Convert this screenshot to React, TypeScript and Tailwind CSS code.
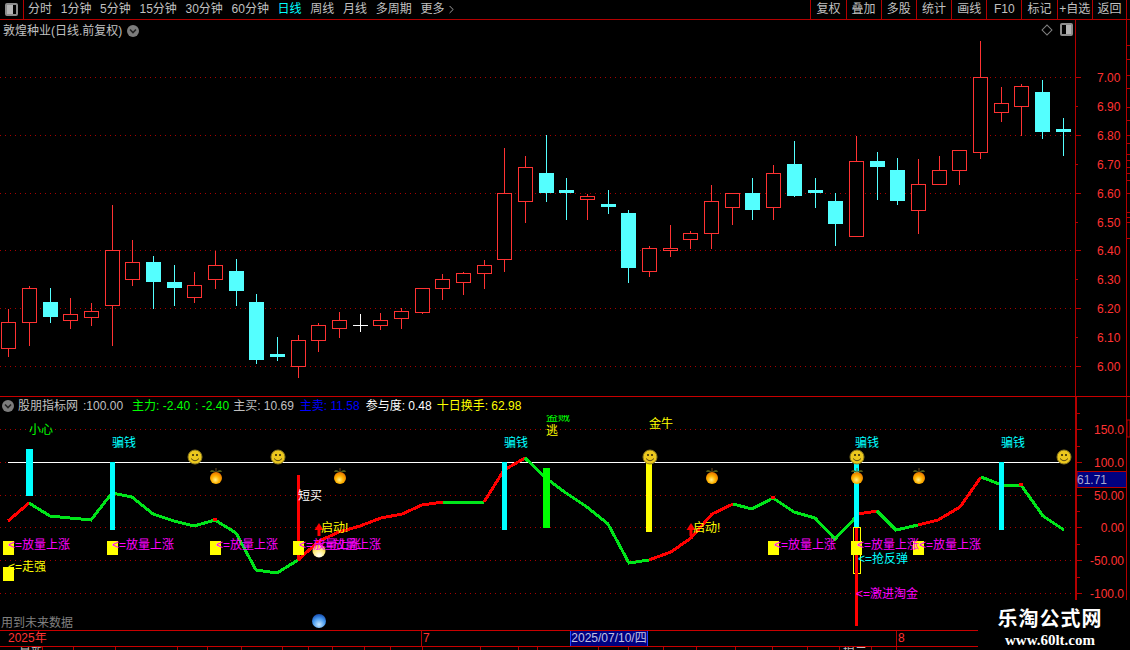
import { ChevronRight } from "lucide-react";

type Candle = [number, number, number, number, number, "r" | "c" | "w"];

// x, wick top, wick bottom, body top, body bottom, kind
const candles: Candle[] = [
  [8, 309, 356, 322, 348, "r"], [29, 286, 345, 288, 322, "r"], [50, 288, 322, 302, 317, "c"],
  [70, 298, 328, 314, 320, "r"], [91, 303, 325, 311, 317, "r"], [112, 205, 345, 250, 305, "r"],
  [132, 240, 285, 262, 279, "r"], [153, 256, 308, 262, 282, "c"], [174, 265, 305, 282, 288, "c"],
  [194, 272, 302, 285, 297, "r"], [215, 251, 288, 265, 279, "r"], [236, 259, 305, 271, 291, "c"],
  [256, 294, 363, 302, 360, "c"], [277, 337, 360, 354, 357, "c"], [298, 335, 377, 340, 366, "r"],
  [318, 323, 351, 325, 340, "r"], [339, 312, 337, 320, 328, "r"], [360, 314, 331, 325, 325, "w"],
  [380, 313, 329, 320, 325, "r"], [401, 308, 328, 311, 318, "r"], [422, 288, 313, 288, 312, "r"],
  [442, 274, 299, 279, 288, "r"], [463, 272, 294, 273, 282, "r"], [484, 260, 288, 265, 273, "r"],
  [504, 148, 271, 193, 259, "r"], [525, 156, 222, 167, 201, "r"], [546, 135, 201, 173, 193, "c"],
  [566, 178, 219, 190, 193, "c"], [587, 194, 219, 196, 199, "r"], [608, 190, 213, 204, 207, "c"],
  [628, 210, 282, 213, 268, "c"], [649, 246, 276, 248, 271, "r"], [670, 225, 256, 248, 250, "r"],
  [690, 231, 248, 233, 239, "r"], [711, 185, 248, 201, 233, "r"], [732, 193, 224, 193, 207, "r"],
  [752, 178, 219, 193, 210, "c"], [773, 165, 219, 173, 207, "r"], [794, 141, 196, 164, 196, "c"],
  [815, 178, 207, 190, 193, "c"], [835, 193, 245, 201, 224, "c"], [856, 136, 236, 161, 236, "r"],
  [877, 152, 199, 161, 167, "c"], [897, 158, 204, 170, 201, "c"], [918, 159, 233, 184, 210, "r"],
  [939, 156, 184, 170, 184, "r"], [959, 150, 184, 150, 170, "r"], [980, 41, 158, 77, 152, "r"],
  [1001, 87, 121, 103, 112, "r"], [1021, 84, 135, 86, 106, "r"], [1042, 80, 138, 92, 132, "c"],
  [1063, 118, 155, 129, 132, "c"],
];

const RED = "#ff3232";
const CYAN = "#54ffff";
const LINE_RED = "#ff0000";
const LINE_GREEN = "#00e61a";

const priceTicks = [
  { y: 77, label: "7.00", major: true }, { y: 106, label: "6.90", major: false },
  { y: 135, label: "6.80", major: true }, { y: 164, label: "6.70", major: false },
  { y: 193, label: "6.60", major: true }, { y: 222, label: "6.50", major: false },
  { y: 250, label: "6.40", major: true }, { y: 279, label: "6.30", major: false },
  { y: 308, label: "6.20", major: true }, { y: 337, label: "6.10", major: false },
  { y: 366, label: "6.00", major: true },
];

const rightTicks = [45, 59, 75, 88, 107, 120, 135, 143, 154, 160, 167, 173, 180, 193, 212, 217, 222, 238];

const indicatorTicks = [
  { y: 429, label: "150.0" }, { y: 462, label: "100.0" }, { y: 495, label: "50.00" },
  { y: 527, label: "0.00" }, { y: 560, label: "-50.00" }, { y: 593, label: "-100.0" },
];

const segments: { color: string; pts: string }[] = [
  { color: LINE_RED, pts: "8,521 29,503" },
  { color: LINE_GREEN, pts: "29,503 50,516 70,518 91,520 112,493 132,497 153,514 174,521 194,526 215,520 236,533 256,570 277,573 298,560" },
  { color: LINE_RED, pts: "298,560 319,541 339,532 360,526 381,518 402,514 422,505 443,502" },
  { color: LINE_GREEN, pts: "443,502 484,502" },
  { color: LINE_RED, pts: "484,502 504,470 525,458" },
  { color: LINE_GREEN, pts: "525,458 546,478 566,493 587,507 608,524 629,563 649,560" },
  { color: LINE_RED, pts: "649,560 671,552 691,538 712,514 733,504" },
  { color: LINE_GREEN, pts: "733,504 752,509 773,498 794,512 815,518 835,539 856,517" },
  { color: LINE_RED, pts: "858,514 877,511" },
  { color: LINE_GREEN, pts: "877,511 896,530 918,525" },
  { color: LINE_RED, pts: "918,525 938,520 960,507 981,477" },
  { color: LINE_GREEN, pts: "981,477 1002,485 1021,485 1043,516 1064,530" },
];

const redDots = [[112, 493], [215, 520], [773, 498], [1021, 485]];

const bars = [
  { x: 26, w: 7, y1: 449, y2: 496, c: "#00ffff" }, { x: 110, w: 5, y1: 462, y2: 530, c: "#00ffff" },
  { x: 502, w: 5, y1: 462, y2: 530, c: "#00ffff" }, { x: 543, w: 7, y1: 468, y2: 528, c: "#00ff00" },
  { x: 646, w: 6, y1: 462, y2: 532, c: "#ffff00" }, { x: 854, w: 5, y1: 462, y2: 530, c: "#00ffff" },
  { x: 999, w: 5, y1: 462, y2: 530, c: "#00ffff" }, { x: 297, w: 3, y1: 475, y2: 560, c: "#ff0000" },
];

const yellowSquares = [
  [3, 541], [107, 541], [210, 541], [293, 541], [3, 567], [768, 541], [851, 541], [913, 541],
];

const riseLabels = [8, 112, 216, 299, 319, 774, 857, 919];
const smileys = [[195, 457], [278, 457], [650, 457], [857, 457], [1064, 457]];
const oranges = [[216, 477], [340, 477], [712, 477], [857, 477], [919, 477]];
const arrows = [319, 691];

const tabs = ["分时", "1分钟", "5分钟", "15分钟", "30分钟", "60分钟", "日线", "周线", "月线", "多周期", "更多"];
const actions = ["复权", "叠加", "多股", "统计", "画线", "F10", "标记", "+自选", "返回"];
const bottomTicks = [42, 73, 115, 177, 207, 241, 282, 308, 332, 364, 390, 422, 480, 518, 537, 598, 628, 663, 696, 735, 772, 807, 839, 871, 896];

function PanelIcon({ side }: { side: "left" | "right" }) {
  return (
    <span className="flex h-[13px] w-[13px] rounded-[2px] border-2 border-[#8c8c8c]">
      <span className={side === "left" ? "w-[6px] bg-[#b4b4b4]" : "ml-auto w-[5px] bg-[#b4b4b4]"} />
    </span>
  );
}

function Collapse() {
  return (
    <span className="flex h-[12px] w-[12px] items-center justify-center rounded-full bg-[#7c7c7c]">
      <svg width="8" height="6" viewBox="0 0 8 6">
        <path d="M1 1.5 L4 4.5 L7 1.5" fill="none" stroke="#222" strokeWidth="1.6" />
      </svg>
    </span>
  );
}

function Toolbar() {
  return (
    <div className="flex h-[20px] shrink-0 border-b border-[#b40000] text-[12px] leading-[19px] text-[#c0c0c0]">
      <div className="flex w-[24px] items-center justify-center border-r border-[#b40000]">
        <PanelIcon side="left" />
      </div>
      <div className="ml-[4px] flex gap-[8.7px]">
        {tabs.map((t) => (
          <span key={t} className={t === "日线" ? "text-[#00ffff]" : ""}>
            {t}
          </span>
        ))}
        <ChevronRight className="-ml-[8px] mt-[3px] h-[13px] w-[13px]" strokeWidth={1.5} />
      </div>
      <div className="ml-auto mr-[3px] flex">
        {actions.map((a, i) => (
          <span
            key={a}
            className={`w-[35.2px] border-l border-[#b40000] text-center ${i === actions.length - 1 ? "border-r" : ""}`}
          >
            {a}
          </span>
        ))}
      </div>
    </div>
  );
}

function Grid({ ys }: { ys: number[] }) {
  return (
    <>
      {ys.map((y) => (
        <line key={y} x1="0" x2="1075" y1={y + 0.5} y2={y + 0.5} stroke="#a80000" strokeDasharray="1 4" />
      ))}
    </>
  );
}

function PriceChart() {
  return (
    <svg width="1075" height="376" viewBox="0 20 1075 376" shapeRendering="crispEdges" className="block shrink-0">
      <Grid ys={[77, 135, 193, 250, 308, 366]} />
      {candles.map(([x, wt, wb, bt, bb, kind]) => {
        const color = kind === "r" ? RED : kind === "c" ? CYAN : "#ffffff";
        return (
          <g key={x}>
            <line x1={x + 0.5} x2={x + 0.5} y1={wt} y2={wb + 1} stroke={color} />
            {kind === "r" && (
              <rect x={x - 6.5} y={bt + 0.5} width="14" height={bb - bt} fill="#000" stroke={color} />
            )}
            {kind === "c" && <rect x={x - 7} y={bt} width="15" height={bb - bt} fill={color} />}
            {kind === "w" && <rect x={x - 7} y={bt} width="15" height="1" fill={color} />}
          </g>
        );
      })}
    </svg>
  );
}

function PriceAxis() {
  return (
    <div className="relative border-l border-[#b40000]">
      <svg width="54" height="376" viewBox="1076 20 54 376" className="block text-[12px]">
        <line x1="1126.5" x2="1126.5" y1="20" y2="396" stroke="#b40000" />
        {rightTicks.map((t) => (
          <line key={t} x1="1127" x2="1130" y1={t + 0.5} y2={t + 0.5} stroke="#b40000" shapeRendering="crispEdges" />
        ))}
        {priceTicks.map((t) => (
          <g key={t.y}>
            <line x1="1076" x2={t.major ? 1081 : 1078} y1={t.y + 0.5} y2={t.y + 0.5} stroke="#b40000" shapeRendering="crispEdges" />
            <text x="1097" y={t.y + 5} className="fill-[#ff3232]">
              {t.label}
            </text>
          </g>
        ))}
      </svg>
    </div>
  );
}

function Smiley({ x, y }: { x: number; y: number }) {
  return (
    <g>
      <circle cx={x} cy={y} r="7" fill="#ecc81e" stroke="#8c7a20" />
      <rect x={x - 3} y={y - 3} width="2" height="2" fill="#5a4a10" />
      <rect x={x + 1} y={y - 3} width="2" height="2" fill="#5a4a10" />
      <path d={`M${x - 4} ${y + 1.5} Q${x} ${y + 6} ${x + 4} ${y + 1.5}`} fill="none" stroke="#5a4a10" />
    </g>
  );
}

function Orange({ x, y }: { x: number; y: number }) {
  return (
    <g>
      <path d={`M${x} ${y - 5} Q${x - 5} ${y - 9} ${x - 6} ${y - 5} Z`} fill="#4d5a1a" />
      <path d={`M${x} ${y - 5} Q${x + 5} ${y - 9} ${x + 6} ${y - 5} Z`} fill="#4d5a1a" />
      <path d={`M${x} ${y - 5} L${x} ${y - 9}`} stroke="#6a4a1a" />
      <circle cx={x} cy={y + 1} r="6" fill="url(#orangeFill)" />
    </g>
  );
}

function IndicatorChart() {
  return (
    <svg width="1075" height="233" viewBox="0 397 1075 233" className="block shrink-0 text-[12px]">
      <defs>
        <radialGradient id="orangeFill" cx="0.45" cy="0.65" r="0.7">
          <stop offset="0" stopColor="#fff08a" />
          <stop offset="0.45" stopColor="#ffb400" />
          <stop offset="1" stopColor="#e06800" />
        </radialGradient>
        <radialGradient id="ballBlue" cx="0.5" cy="0.75" r="0.7">
          <stop offset="0" stopColor="#c8e8ff" />
          <stop offset="0.6" stopColor="#4a9cf0" />
          <stop offset="1" stopColor="#1c56b8" />
        </radialGradient>
        <radialGradient id="ballYellow" cx="0.5" cy="0.85" r="0.8">
          <stop offset="0" stopColor="#ffffff" />
          <stop offset="0.5" stopColor="#fff08a" />
          <stop offset="1" stopColor="#e6c81e" />
        </radialGradient>
      </defs>
      <g shapeRendering="crispEdges">
        <Grid ys={[429, 495, 527, 560, 593]} />
        <line x1="0" x2="8" y1="462.5" y2="462.5" stroke="#a80000" strokeDasharray="1 4" />
        <line x1="8" x2="1064" y1="462.5" y2="462.5" stroke="#fff" />
        {segments.map((s) => (
          <polyline key={s.pts} points={s.pts} fill="none" stroke={s.color} strokeWidth="3" />
        ))}
        {redDots.map(([x, y]) => (
          <rect key={x} x={x - 2} y={y - 2} width="4" height="3" fill="#ff0000" />
        ))}
        {bars.map((b) => (
          <rect key={b.x} x={b.x} y={b.y1} width={b.w} height={b.y2 - b.y1} fill={b.c} />
        ))}
        <rect x="853.5" y="527.5" width="7" height="46" fill="#000" stroke="#ffff00" />
        <rect x="855" y="528" width="3" height="98" fill="#ff0000" />
        {yellowSquares.map(([x, y]) => (
          <rect key={`${x}-${y}`} x={x} y={y} width="11" height="14" fill="#ffff00" />
        ))}
      </g>
      {arrows.map((x) => (
        <g key={x}>
          <rect x={x - 1.5} y="529" width="3" height="7" fill="#ff0000" />
          <path d={`M${x - 4.5} 530 L${x} 523 L${x + 4.5} 530 Z`} fill="#ff0000" />
        </g>
      ))}
      {smileys.map(([x, y]) => (
        <Smiley key={x} x={x} y={y} />
      ))}
      {oranges.map(([x, y]) => (
        <Orange key={x} x={x} y={y} />
      ))}
      <circle cx="319" cy="551" r="6.5" fill="url(#ballYellow)" />
      <circle cx="319" cy="621" r="7" fill="url(#ballBlue)" />

      <text x="29" y="434" className="fill-[#00ff00]">小心</text>
      {[112, 504, 855, 1001].map((x) => (
        <text key={x} x={x} y="447" className="fill-[#00ffff]">骗钱</text>
      ))}
      <text x="546" y="421" className="fill-[#00ff00]">盗贼</text>
      <text x="546" y="435" className="fill-[#ffff00]">逃</text>
      <text x="649" y="428" className="fill-[#ffff00]">金牛</text>
      <text x="298" y="500" className="fill-[#ffffff]">短买</text>
      {[321, 693].map((x) => (
        <text key={x} x={x} y="532" className="fill-[#ffff00]">启动!</text>
      ))}
      {riseLabels.map((x) => (
        <text key={x} x={x} y="549" className="fill-[#ff00ff]">{"<=放量上涨"}</text>
      ))}
      <text x="8" y="571" className="fill-[#ffff00]">{"<=走强"}</text>
      <text x="858" y="563" className="fill-[#00ffff]">{"<=抢反弹"}</text>
      <text x="856" y="598" className="fill-[#ff00ff]">{"<=激进淘金"}</text>
      <text x="1" y="627" className="fill-[#808080]">用到未来数据</text>
    </svg>
  );
}

function IndicatorAxis() {
  return (
    <div className="border-l-2 border-[#b40000]">
      <svg width="53" height="233" viewBox="1077 397 53 233" className="block text-[12px]">
        <line x1="1126.5" x2="1126.5" y1="397" y2="600" stroke="#b40000" />
        <rect x="1127" y="420" width="3" height="17" fill="#000" stroke="#b40000" />
        {indicatorTicks.map((t) => (
          <g key={t.y}>
            <line x1="1077" x2="1082" y1={t.y + 0.5} y2={t.y + 0.5} stroke="#b40000" shapeRendering="crispEdges" />
            <text x="1124" y={t.y + 5} textAnchor="end" className="fill-[#ff3232]">
              {t.label}
            </text>
          </g>
        ))}
        {[413, 446, 511, 544, 577].map((y) => (
          <line key={y} x1="1077" x2="1080" y1={y + 0.5} y2={y + 0.5} stroke="#b40000" shapeRendering="crispEdges" />
        ))}
        <rect x="1077" y="471.5" width="49.5" height="16" fill="#000080" stroke="#b40000" />
        <text x="1077" y="484" className="fill-[#a8a8d0]">61.71</text>
      </svg>
    </div>
  );
}

// black band: the indicator's top labels get cut off under it
function Legend() {
  return (
    <div className="absolute left-0 top-0 flex h-[18px] w-[1075px] items-center bg-black pl-[2px] text-[12px] text-[#c0c0c0]">
      <Collapse />
      <span className="ml-[4px]">股朋指标网</span>
      <span className="ml-[5px]">:100.00</span>
      <span className="ml-[9px] text-[#00ff00]">主力: -2.40</span>
      <span className="ml-[5px] text-[#00ff00]">: -2.40</span>
      <span className="ml-[4px]">主买: 10.69</span>
      <span className="ml-[6px] text-[#0000ff]">主卖: 11.58</span>
      <span className="ml-[6px] text-[#ffffff]">参与度: 0.48</span>
      <span className="ml-[5px] text-[#ffff00]">十日换手: 62.98</span>
    </div>
  );
}

function TimeAxis() {
  return (
    <div className="relative flex h-[17px] w-[978px] shrink-0 border-y border-[#c80000] text-[12px] leading-[15px] text-[#ff3232]">
      <div className="w-[421px] pl-[8px]">2025年</div>
      <div className="w-[475px] border-l border-[#b40000] pl-[1px]">7</div>
      <div className="flex-1 border-l border-[#b40000] pl-[1px]">8</div>
      <span className="absolute left-[570px] top-0 h-[15px] w-[78px] border-x border-[#2040ff] bg-[#000080] text-center text-[#c0c0e0]">
        2025/07/10/四
      </span>
    </div>
  );
}

function StatusStrip() {
  return (
    <div className="relative h-[3px] w-[978px] shrink-0 overflow-hidden text-[12px] leading-[12px] text-[#c0c0c0]">
      {bottomTicks.map((x) => (
        <span key={x} className="absolute top-0 h-[3px] w-px bg-[#b40000]" style={{ left: x }} />
      ))}
      <span className="absolute left-[19px] top-0">最新</span>
      <span className="absolute left-[843px] top-0">提示</span>
    </div>
  );
}

export default function App() {
  return (
    <div className="relative flex h-[650px] w-[1130px] flex-col overflow-hidden bg-black font-['Liberation_Sans','Noto_Sans_CJK_SC',sans-serif]">
      <Toolbar />

      <section className="relative flex h-[376px] shrink-0">
        <PriceChart />
        <PriceAxis />
        <div className="absolute left-[3px] top-[2px] flex h-[18px] items-center gap-[5px] text-[12px] text-[#c0c0c0]">
          <span>敦煌种业(日线.前复权)</span>
          <Collapse />
        </div>
        <div className="absolute right-[57px] top-[3px] flex items-center gap-[9px]">
          <span className="h-[8px] w-[8px] rotate-45 border border-[#808080]" />
          <PanelIcon side="right" />
        </div>
      </section>

      <section className="relative flex h-[234px] shrink-0 border-t border-[#c80000]">
        <IndicatorChart />
        <IndicatorAxis />
        <Legend />
      </section>

      <TimeAxis />
      <StatusStrip />

      <div className="absolute bottom-0 right-0 flex h-[50px] w-[152px] flex-col items-center bg-black pr-[8px] pt-[6px] text-white">
        <span className="text-[20px] leading-[26px] font-bold tracking-[1px] font-['Liberation_Serif','Noto_Sans_CJK_SC',serif]">乐淘公式网</span>
        <span className="text-[15px] leading-[16px] font-bold font-['Liberation_Serif',serif]">www.60lt.com</span>
      </div>
    </div>
  );
}
